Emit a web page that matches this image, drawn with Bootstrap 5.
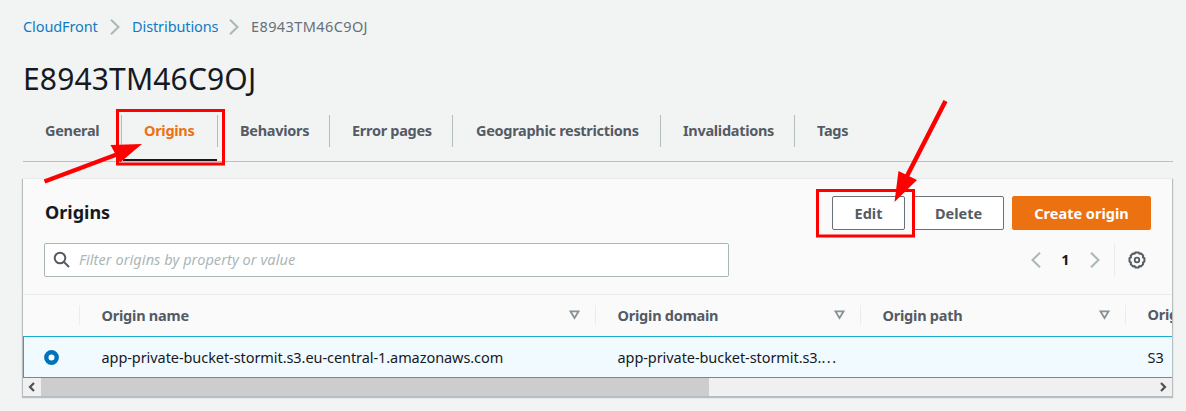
<!DOCTYPE html>
<html lang="en">
<head>
<meta charset="utf-8">
<meta name="viewport" content="width=device-width, initial-scale=1">
<title>CloudFront - Origins</title>
<link href="https://cdn.jsdelivr.net/npm/bootstrap@5.3.0/dist/css/bootstrap.min.css" rel="stylesheet">
<style>
body{background:#f2f4f4;color:#16191f;font:14.5px/22px "Noto Sans","Open Sans",sans-serif;height:411px;overflow:hidden}
svg{display:block;flex:none}
.page{width:1186px;height:411px;padding:0 13px 0 23px}
.crumbs{height:54px;padding-top:15px;letter-spacing:-.1px}
.crumbs a{color:#0f7bc4;text-decoration:none}
.crumbs .step{display:flex;justify-content:space-between}
.crumbs svg{margin-top:4px}
.crumbs .here{color:#687078;letter-spacing:.4px}
.page-title{font-size:30px;line-height:36px;height:54px;padding-top:7px;margin:0;font-weight:400;letter-spacing:.15px}
.tabs{height:54px;margin:0;border-bottom:1px solid #b8c2c4;flex-wrap:nowrap}
.tabs .nav-link{position:relative;height:53px;padding:11px 0 0 22px;font-weight:700;color:#545b64;white-space:nowrap;letter-spacing:-.3px}
.tabs .nav-link:not(:last-child)::after{content:"";position:absolute;right:0;top:7px;width:1px;height:32px;background:#b3bec0}
.tabs .nav-link.active{color:#ec7211}
.tabs .nav-link.active::before{content:"";position:absolute;left:1px;right:1px;bottom:0;height:2px;background:#16191f}
.t1{width:99px}.t2{width:96px}.t3{width:112px}.t4{width:123px}.t5{width:208px}.t6{width:134px}
.panel{width:1149px;height:217px;margin-top:17px;background:#fafafa;border:0;border-radius:0;box-shadow:0 1px 1px 1px rgba(0,28,36,.25);overflow:hidden}
.panel-head{height:116px;padding:17px 21px 0 21px;border-bottom:1px solid #eaeded}
.panel-head h2{font-size:18px;line-height:32px;font-weight:700;margin:0 0 0 1px;letter-spacing:0}
.act{height:34px;padding:0;border:1px solid #687078;border-radius:2px;background:#fff;color:#545b64;font-size:14.5px;font-weight:700;line-height:31px}
.act.main{background:#ec7211;border-color:#ec7211;color:#fff}
.filter{width:685px;height:34px;border:1px solid #aab7b8;border-radius:2px;background:#fff;padding-left:8px;color:#aab7b8;font-style:italic;letter-spacing:.07px}
.filter span{margin:-2px 0 0 8px}
.pager{width:120px;height:34px}
.rule{width:1px;height:34px;background:#eaeded}
.grid-row{display:grid;grid-template-columns:57px 516px 265px 265px 80px;width:1183px}
.head-row{height:41px;font-weight:700;color:#545b64;letter-spacing:-.23px}
.head-row>div{height:20px;margin-top:10px;line-height:18px;border-right:1px solid #eaeded;padding:0 15px 0 21.500px;white-space:nowrap}
.pick{height:42px;background:#f1faff;border:1px solid #18abd3;border-right:0;align-items:center;letter-spacing:-.07px}
.pick>div{padding:0 0 1px 20.500px;white-space:nowrap}
.pick>div:first-child{padding:0 0 0 20px}
.scroller{height:18px;background:#f0f0f0}
.thumb{width:668px;height:18px;background:#cdcdcd}
.notes{position:absolute;left:0;top:0;pointer-events:none}
</style>
</head>
<body>
<main class="page">
<nav class="crumbs d-flex" aria-label="breadcrumb">
<div class="step" style="width:97px"><a href="#">CloudFront</a><svg width="10" height="16" viewBox="0 0 10 16" fill="none" stroke="#aab7b8" stroke-width="2"><path d="M1 .7L8.500 8 1 15.300"/></svg></div>
<div class="step" style="width:107px;margin:0 12px"><a href="#">Distributions</a><svg width="10" height="16" viewBox="0 0 10 16" fill="none" stroke="#aab7b8" stroke-width="2"><path d="M1 .7L8.500 8 1 15.300"/></svg></div>
<span class="here">E8943TM46C9OJ</span>
</nav>
<h1 class="page-title">E8943TM46C9OJ</h1>
<nav class="nav tabs">
<a class="nav-link t1" href="#">General</a><a class="nav-link active t2" href="#">Origins</a><a class="nav-link t3" href="#">Behaviors</a><a class="nav-link t4" href="#">Error pages</a><a class="nav-link t5" href="#" style="padding-left:23px">Geographic restrictions</a><a class="nav-link t6" href="#">Invalidations</a><a class="nav-link" href="#">Tags</a>
</nav>
<section class="card panel">
<div class="panel-head">
<div class="d-flex justify-content-between">
<h2>Origins</h2>
<div class="d-flex"><button class="btn act" style="width:73px">Edit</button><button class="btn act" style="width:91px;margin:0 8px">Delete</button><button class="btn act main" style="width:139px">Create origin</button></div>
</div>
<div class="d-flex justify-content-between" style="margin-top:13px">
<div class="filter d-flex align-items-center"><svg width="18" height="18" viewBox="0 0 18 18" fill="none" stroke="#545b64" stroke-width="2"><circle cx="7" cy="7" r="5.3"/><path d="M11 11l5 5"/></svg><span>Filter origins by property or value</span></div>
<div class="pager d-flex align-items-center"><svg width="10" height="16" viewBox="0 0 10 16" fill="none" stroke="#aab7b8" stroke-width="2"><path d="M9 .7L1.500 8 9 15.300"/></svg><b class="text-center" style="width:49px;margin-top:-2px">1</b><svg width="10" height="16" viewBox="0 0 10 16" fill="none" stroke="#aab7b8" stroke-width="2"><path d="M1 .7L8.500 8 1 15.300"/></svg><span class="rule" style="margin:0 13px 0 14px"></span><svg width="18" height="18" viewBox="0 0 18 18" fill="none" stroke="#545b64" stroke-width="2" stroke-linejoin="round"><path d="M7.300 1.400h3.400l.7 1.300 1.700-.3 2.100 2.300-.3 1.600 1.500.8v3.500l-1.400.8.2 1.700-2.200 2.300-1.700-.3-.7 1.400H7.400l-.8-1.400-1.700.3-2.200-2.300.3-1.700-1.500-.8V7.100L3 6.300l-.3-1.600 2.200-2.300 1.700.3z"/><circle cx="9" cy="9" r="2.300" stroke-width="1.800"/></svg></div>
</div>
</div>
<div class="grid-row head-row">
<div></div>
<div class="d-flex justify-content-between align-items-center">Origin name<svg width="11" height="10" viewBox="0 0 11 10" fill="none" stroke="#879196" stroke-width="1.7"><path d="M1.4 1.3h8.2L5.5 8z"/></svg></div>
<div class="d-flex justify-content-between align-items-center">Origin domain<svg width="11" height="10" viewBox="0 0 11 10" fill="none" stroke="#879196" stroke-width="1.7"><path d="M1.4 1.3h8.2L5.5 8z"/></svg></div>
<div class="d-flex justify-content-between align-items-center">Origin path<svg width="11" height="10" viewBox="0 0 11 10" fill="none" stroke="#879196" stroke-width="1.7"><path d="M1.4 1.3h8.2L5.5 8z"/></svg></div>
<div>Origin type</div>
</div>
<div class="grid-row pick">
<div><svg width="15" height="15" viewBox="0 0 15 15"><circle cx="7.5" cy="7.5" r="5.2" fill="#fff" stroke="#0073bb" stroke-width="4.4"/></svg></div>
<div>app-private-bucket-stormit.s3.eu-central-1.amazonaws.com</div>
<div>app-private-bucket-stormit.s3.<span style="letter-spacing:1.500px">...</span></div>
<div></div>
<div>S3</div>
</div>
<div class="scroller d-flex align-items-center">
<svg width="18" height="18" viewBox="0 0 18 18" fill="none" stroke="#505050" stroke-width="2.2"><path d="M11 5L7 9l4 4"/></svg><div class="thumb"></div>
<svg class="ms-auto" width="18" height="18" viewBox="0 0 18 18" fill="none" stroke="#505050" stroke-width="2.2"><path d="M7 5l4 4-4 4"/></svg>
</div>
</section>
</main>
<svg class="notes" width="1186" height="411" viewBox="0 0 1186 411" fill="none">
<g stroke="#f00" stroke-width="3"><path d="M117.500 110.500h106v53.500h-106zM817.500 190.500h96v45.500h-96z"/></g>
<path d="M44.500 181.500L118 154M945.500 101L906 178" stroke="#f00" stroke-width="4.500"/>
<path d="M142 144l-31.500 1 9.500 17.500zM894.500 202l4-31 18.500 9z" fill="#f00"/>
</svg>
<script src="https://cdn.jsdelivr.net/npm/bootstrap@5.3.0/dist/js/bootstrap.bundle.min.js"></script>
</body>
</html>
